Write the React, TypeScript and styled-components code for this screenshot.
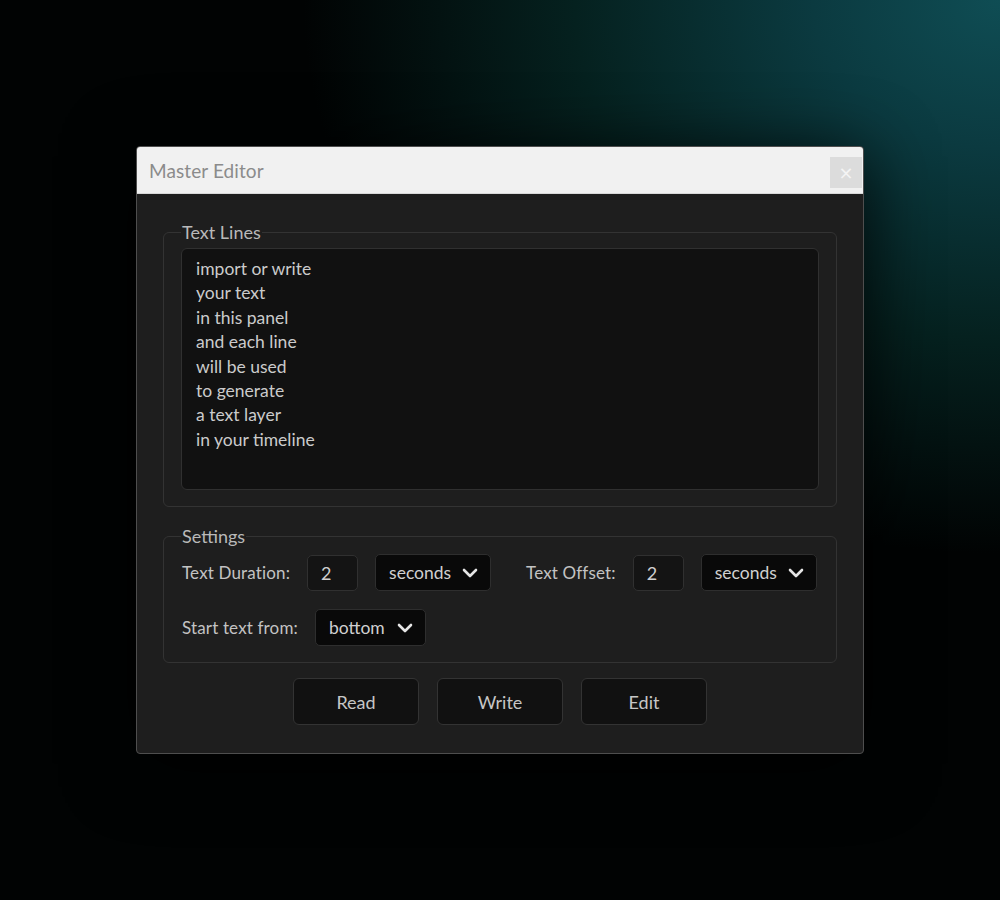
import styled, { createGlobalStyle } from 'styled-components';

const GlobalStyle = createGlobalStyle`
    html, body {
        margin: 0;
        padding: 0;
        height: 100%;
    }
    body {
        background: #000;
        font-family: Lato, "Open Sans", sans-serif;
    }
`;

const Backdrop = styled.div`
    width: 100vw;
    height: 100vh;
    display: flex;
    align-items: center;
    justify-content: center;
    background:
        radial-gradient(ellipse 85% 75% at 100% 0%, #0f4d54 0%, #0b3a40 22%, #05211f 50%, rgba(0, 0, 0, 0) 82%),
        #010303;
`;

const Window = styled.div`
    width: 728px;
    border: 1px solid #4e4e4e;
    border-radius: 4px;
    overflow: hidden;
    background: #1e1e1e;
    box-shadow: 0 10px 70px rgba(0, 0, 0, 0.85);
    box-sizing: border-box;
`;

const TitleBar = styled.div`
    height: 46px;
    display: flex;
    align-items: center;
    justify-content: space-between;
    padding: 0 1px 0 12px;
    background: #f1f1f1;
    border-bottom: 1px solid #d8d8d8;
`;

const Title = styled.span`
    font-size: 19px;
    color: #8b8b8b;
    letter-spacing: 0.1px;
`;

const CloseButton = styled.button`
    width: 32px;
    height: 31px;
    margin-top: 4px;
    border: none;
    padding: 0;
    background: #dcdcdc;
    color: #f4f4f4;
    font-size: 18px;
    line-height: 31px;
    font-family: "DejaVu Sans", sans-serif;
`;

const Body = styled.div`
    padding: 28px 26px 28px;
    display: flex;
    flex-direction: column;
    gap: 19px;
`;

const Group = styled.fieldset`
    margin: 0;
    padding: 0 17px 16px;
    border: 1px solid #333;
    border-radius: 6px;
    min-width: 0;
`;

const Legend = styled.legend`
    padding: 0 1px;
    font-size: 18px;
    color: #b9b9b9;
    line-height: 20px;
`;

const TextArea = styled.textarea`
    display: block;
    width: 100%;
    height: 242px;
    box-sizing: border-box;
    margin-top: 6px;
    padding: 8px 13px 8px 14px;
    resize: none;
    outline: none;
    background: #111;
    border: 1px solid #303030;
    border-radius: 6px;
    color: #cbcbcb;
    font-family: Lato, "Open Sans", sans-serif;
    font-size: 17.5px;
    line-height: 24.4px;
    overflow: hidden;
`;

const Rows = styled.div`
    display: flex;
    flex-direction: column;
    gap: 18px;
    padding: 8px 0 0 1px;
`;

const Row = styled.div`
    display: flex;
    align-items: center;
    gap: 17px;
`;

const Label = styled.span<{ $space?: number }>`
    flex-shrink: 0;
    white-space: nowrap;
    font-size: 17px;
    letter-spacing: 0.15px;
    color: #c3c3c3;
    margin-left: ${(p) => p.$space ?? 0}px;
`;

const NumberBox = styled.div`
    flex-shrink: 0;
    width: 51px;
    height: 36px;
    box-sizing: border-box;
    padding-left: 13px;
    display: flex;
    align-items: center;
    background: #141414;
    border: 1px solid #303030;
    border-radius: 5px;
    color: #cfcfcf;
    font-size: 18px;
`;

const Select = styled.div<{ $width: number }>`
    flex-shrink: 0;
    width: ${(p) => p.$width}px;
    height: 37px;
    box-sizing: border-box;
    padding: 0 12px 0 13px;
    display: flex;
    align-items: center;
    justify-content: space-between;
    background: #090909;
    border: 1px solid #2e2e2e;
    border-radius: 5px;
    color: #d0d0d0;
    font-size: 17.5px;
`;

const Buttons = styled.div`
    display: flex;
    justify-content: center;
    gap: 18px;
    margin-top: -4px;
`;

const ActionButton = styled.button`
    width: 126px;
    height: 47px;
    background: #111;
    border: 1px solid #333;
    border-radius: 6px;
    color: #c6c6c6;
    font-family: Lato, "Open Sans", sans-serif;
    font-size: 18px;
`;

const Chevron = () => (
    <svg width="16" height="10" viewBox="0 0 16 10">
        <path d="M2 2l6 6 6-6" fill="none" stroke="#e6e6e6" strokeWidth="2.6" strokeLinecap="round" strokeLinejoin="round" />
    </svg>
);

const lines = [
    'import or write',
    'your text',
    'in this panel',
    'and each line',
    'will be used',
    'to generate',
    'a text layer',
    'in your timeline',
].join('\n');

export default function App() {
    return (
        <>
            <GlobalStyle />
            <Backdrop>
                <Window>
                    <TitleBar>
                        <Title>Master Editor</Title>
                        <CloseButton>×</CloseButton>
                    </TitleBar>
                    <Body>
                        <Group>
                            <Legend>Text Lines</Legend>
                            <TextArea defaultValue={lines} spellCheck={false} />
                        </Group>
                        <Group>
                            <Legend>Settings</Legend>
                            <Rows>
                                <Row>
                                    <Label>Text Duration:</Label>
                                    <NumberBox>2</NumberBox>
                                    <Select $width={116}>
                                        seconds <Chevron />
                                    </Select>
                                    <Label $space={18}>Text Offset:</Label>
                                    <NumberBox>2</NumberBox>
                                    <Select $width={116}>
                                        seconds <Chevron />
                                    </Select>
                                </Row>
                                <Row>
                                    <Label>Start text from:</Label>
                                    <Select $width={111}>
                                        bottom <Chevron />
                                    </Select>
                                </Row>
                            </Rows>
                        </Group>
                        <Buttons>
                            <ActionButton>Read</ActionButton>
                            <ActionButton>Write</ActionButton>
                            <ActionButton>Edit</ActionButton>
                        </Buttons>
                    </Body>
                </Window>
            </Backdrop>
        </>
    );
}
